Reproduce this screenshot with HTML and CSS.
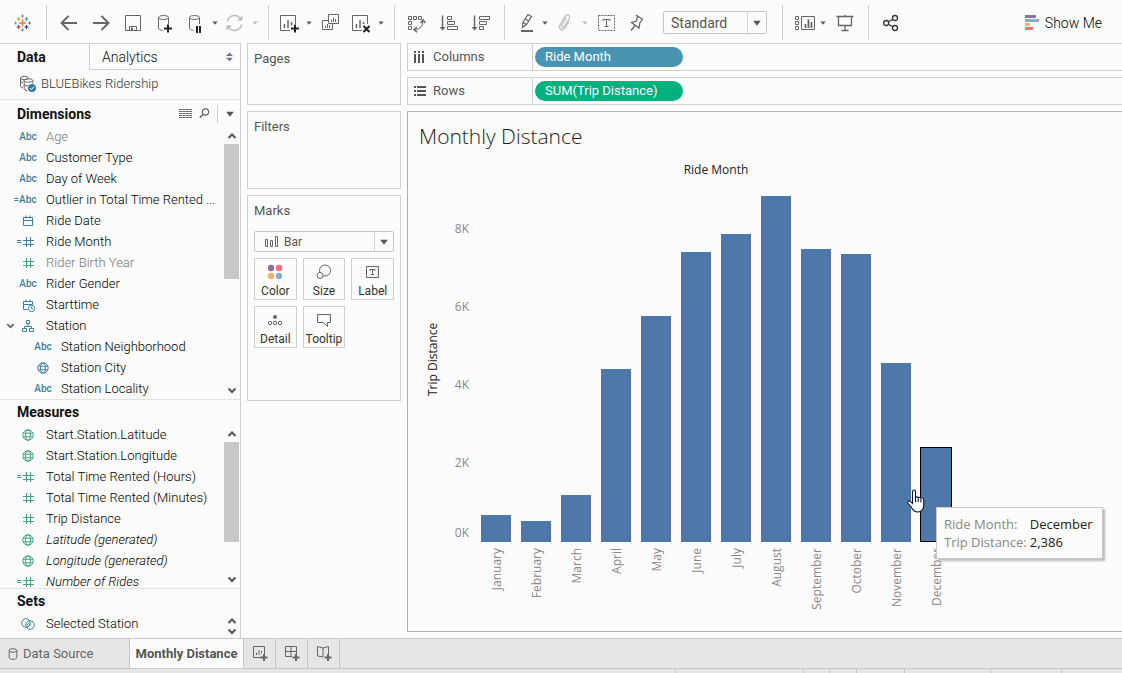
FILE: index.html
```html
<!DOCTYPE html>
<html lang="en">
<head>
<meta charset="utf-8">
<title>Monthly Distance</title>
<meta name="viewport" content="width=device-width, initial-scale=1">
<link rel="stylesheet" href="styles.css">
</head>
<body>
<svg class="defs" aria-hidden="true">
  <symbol id="i-caret" viewBox="0 0 8 8"><path d="M1.5 2.5h5L4 5.8z" fill="currentColor"/></symbol>
  <symbol id="i-hash" viewBox="0 0 12 12"><path d="M4.500 1v10M8.500 1v10M1 4.500h11M1 8.500h11" fill="none" stroke="currentColor"/></symbol>
  <symbol id="i-globe" viewBox="0 0 12 12"><g fill="none" stroke="currentColor"><circle cx="6" cy="6" r="5.2"/><ellipse cx="6" cy="6" rx="2.4" ry="5.2"/><path d="M1.2 4.2h9.6M1.2 7.8h9.6"/></g></symbol>
  <symbol id="i-up" viewBox="0 0 10 10"><path d="M1.5 7L5 3.5 8.500 7" fill="none" stroke="currentColor" stroke-width="2"/></symbol>
  <symbol id="i-down" viewBox="0 0 10 10"><path d="M1.5 3.500L5 7l3.500-3.500" fill="none" stroke="currentColor" stroke-width="2"/></symbol>
</svg>

<header class="toolbar">
  <div class="brand">
    <svg width="18" height="18" viewBox="0 0 18 18" fill="none">
      <path d="M8.500 5.500v7M5 9h7" stroke="#eb7b3a" stroke-width="1.300"/>
      <path d="M4.500 3v4M2.500 5h4" stroke="#f0a03c" stroke-width="1.200"/>
      <path d="M12.500 3v4M10.500 5h4" stroke="#5b93a8" stroke-width="1.200"/>
      <path d="M4.500 11v4M2.500 13h4" stroke="#c8304c" stroke-width="1.200"/>
      <path d="M12.500 11v4M10.500 13h4" stroke="#29467a" stroke-width="1.200"/>
      <path d="M8.500 .5v3M7 2h3M8.500 14.500v3M7 16h3" stroke="#7c80a4"/>
      <path d="M1.500 7.500v3M0 9h3" stroke="#6ba3b5"/><path d="M15.500 7.500v3M14 9h3" stroke="#6c6f99"/>
    </svg>
  </div>
  <div class="group">
    <button class="tool" aria-label="Undo"><svg viewBox="0 0 24 24"><path d="M4.500 12H20M11.500 5l-7 7 7 7" stroke-width="1.900"/></svg></button>
    <button class="tool" aria-label="Redo"><svg viewBox="0 0 24 24"><path d="M4 12h15.500M12.500 5l7 7-7 7" stroke-width="1.900"/></svg></button>
    <button class="tool" aria-label="Save"><svg viewBox="0 0 24 24"><path d="M4.500 4.500h15v15h-15zM8.500 19.500v-4h7v4"/><path d="M10 16.500h2v3h-2z" class="solid"/></svg></button>
    <button class="tool" aria-label="New Data Source"><svg viewBox="0 0 24 24"><ellipse cx="10.500" cy="6.500" rx="5" ry="2"/><path d="M5.500 6.500V17c0 1.200 1.500 2 4 2.300M15.500 6.500V13"/><path d="M15 13.500v8M11 17.500h8" class="strong"/></svg></button>
    <button class="tool tool-narrow" aria-label="Pause Auto Updates"><svg viewBox="0 0 24 24"><ellipse cx="11.500" cy="6.500" rx="5" ry="2"/><path d="M6.500 6.500V17c0 1.200 1.500 2 4 2.300M16.500 6.500V13"/><path d="M14 15v7M17 15v7" class="strong"/></svg></button>
    <button class="caret" aria-label="Auto update options"><svg><use href="#i-caret"/></svg></button>
    <button class="tool tool-narrow muted" aria-label="Run Update"><svg viewBox="0 0 24 24"><path d="M4.500 10.500A7 7 0 0 1 17.500 8M18.500 13.500A7 7 0 0 1 5.500 16" stroke-width="1.500"/><path d="M19.500 4.500v5h-5.300zM3.500 19.500v-5h5.300z" class="solid"/></svg></button>
    <button class="caret muted" aria-label="Update options"><svg><use href="#i-caret"/></svg></button>
  </div>
  <div class="group">
    <button class="tool tool-narrow" aria-label="New Worksheet"><svg viewBox="0 0 24 24"><path d="M13 19.500H3.500v-15h15V13"/><path d="M7.500 17v-4M11 17V9M14.500 14.500V11" stroke-width="1.500"/><path d="M18 13.500v8M14 17.500h8" class="strong"/></svg></button>
    <button class="caret" aria-label="New worksheet options"><svg><use href="#i-caret"/></svg></button>
    <button class="tool" aria-label="Duplicate"><svg viewBox="0 0 24 24"><path d="M9.500 3.500h10v9h-10zM9 9.500H3.500v9h10V13M12.500 11V8.500M14.500 11V6.500M16.500 11V8M6.500 17v-2.500M8.500 17v-4M10.500 17v-3"/></svg></button>
    <button class="tool tool-narrow" aria-label="Clear Sheet"><svg viewBox="0 0 24 24"><path d="M13 19.500H3.500v-15h15V13"/><path d="M7.500 17v-4M11 17V9M14.500 13V11" stroke-width="1.500"/><path d="M14.500 15l6 6M20.500 15l-6 6" class="strong"/></svg></button>
    <button class="caret" aria-label="Clear options"><svg><use href="#i-caret"/></svg></button>
  </div>
  <div class="group">
    <button class="tool" aria-label="Swap Rows and Columns"><svg viewBox="0 0 24 24"><path d="M3.500 5.500h3v3h-3zM8.500 5.500h3v3h-3zM13.500 5.500h3v3h-3zM3.500 10.500h3v3h-3zM3.500 15.500h3v3h-3zM10.500 18.500q7-.5 7.500-8" /><path d="M15.500 12l2.600-3 2.400 3M12 16l-3 2.500 3 2.600" stroke-width="1.500"/></svg></button>
    <button class="tool" aria-label="Sort Ascending"><svg viewBox="0 0 24 24"><path d="M5.500 4.500V18" stroke-width="1.500"/><path d="M2.500 16h6l-3 3.600z" class="solid"/><path d="M10.500 5.500h4v3h-4zM10.500 10.500h7v3h-7zM10.500 15.500h10v3h-10z"/></svg></button>
    <button class="tool" aria-label="Sort Descending"><svg viewBox="0 0 24 24"><path d="M5.500 4.500V18" stroke-width="1.500"/><path d="M2.500 16h6l-3 3.600z" class="solid"/><path d="M10.500 5.500h10v3h-10zM10.500 10.500h7v3h-7zM10.500 15.500h4v3h-4z"/></svg></button>
  </div>
  <div class="group">
    <button class="tool tool-narrow" aria-label="Highlight"><svg viewBox="0 0 24 24"><path d="M9.500 16.500l.5-5 5-8 3.500 2-5 8zM10 11.500l3.500 2M12.500 8l3.500 2" stroke-width="1.200"/><path d="M8 20h12" stroke-width="2"/></svg></button>
    <button class="caret" aria-label="Highlight options"><svg><use href="#i-caret"/></svg></button>
    <button class="tool tool-narrow muted" aria-label="Group Members"><svg viewBox="0 0 24 24"><path d="M13 7l-4 7c-1 2 1 3.200 2.200 1.500l5-7.500c2-3.500-2-5.500-4.200-2.500l-5 8.500c-2 4 2 6.500 4.500 3.500l4.500-7" stroke-width="1.200"/></svg></button>
    <button class="caret muted" aria-label="Group options"><svg><use href="#i-caret"/></svg></button>
    <button class="tool" aria-label="Show Mark Labels"><svg viewBox="0 0 24 24"><path d="M3.500 4.500h16v15h-16z" stroke-dasharray="2 1"/><path d="M8 10V8.500h7V10M11.500 8.500v7M9.500 15.500h4"/></svg></button>
    <button class="tool tool-narrow" aria-label="Fix Axes"><svg viewBox="0 0 24 24"><path d="M11 4l7 4.500M12.500 5l-1 5-5 1.500 7.500 5.500.8-5 2.700-4M10 14.500L6 19.500" stroke-width="1.300"/></svg></button>
    <label class="select fit"><select aria-label="Fit"><option>Standard</option></select><svg><use href="#i-caret"/></svg></label>
  </div>
  <div class="group">
    <button class="tool tool-narrow" aria-label="Show or Hide Cards"><svg viewBox="0 0 24 24"><path d="M4.500 5.500h3v3h-3zM4.500 10.500h3v3h-3zM4.500 15.500h3v3h-3zM10.500 5.500h13v13h-13z"/><path d="M14.500 17v-4M17.500 17V8.500M20.500 17v-6" stroke-width="1.800"/></svg></button>
    <button class="caret" aria-label="Cards options"><svg><use href="#i-caret"/></svg></button>
    <button class="tool" aria-label="Presentation Mode"><svg viewBox="0 0 24 24"><path d="M3.500 5.500h17M5.500 5.500v9h13v-9M12 15v4.500M8.500 19.500h7M12 4v1.500" stroke-width="1.300"/></svg></button>
  </div>
  <div class="group group-last">
    <button class="tool" aria-label="Share"><svg viewBox="0 0 24 24" class="dark"><circle cx="7.200" cy="12" r="2.500"/><circle cx="16" cy="7" r="2.500"/><circle cx="16" cy="17" r="2.500"/><path d="M9.500 10.800L13.700 8.300M9.500 13.200l4.200 2.500"/></svg></button>
  </div>
  <button class="show-me">
    <svg width="14" height="16" viewBox="0 0 14 16"><path fill="#8b7196" d="M0 0h11v3H0z"/><path fill="#8aaccb" d="M0 4h14v3H0z"/><path fill="#f6b26b" d="M0 8h5v3H0z"/><path fill="#f8707f" d="M0 12h8v3H0z"/></svg>
    Show Me
  </button>
</header>

<main class="workspace">
  <aside class="sidebar">
    <div class="side-tabs">
      <button class="side-tab active">Data</button>
      <button class="side-tab">Analytics <svg width="7" height="10" viewBox="0 0 7 10"><path d="M0 4h7L3.500.500zM0 5.800h7L3.500 9.300z" fill="#6a7694"/></svg></button>
    </div>
    <a class="source" href="#source">
      <svg width="18" height="18" viewBox="0 0 18 18" fill="none" stroke="#666"><ellipse cx="5.500" cy="3" rx="4" ry="1.600"/><path d="M1.500 3v8c0 1 1 1.700 2.500 1.900M1.500 6c0 .8 1 1.300 2.500 1.500"/><ellipse cx="9.500" cy="5.500" rx="4.300" ry="1.700"/><path d="M5.200 5.500v8.300c0 1 1.300 1.700 3.300 1.900M13.800 5.500v3M5.200 9.500c.8 1 2 1.300 4 1.200"/><circle cx="13" cy="13" r="4" fill="#2f7e9e" stroke="none"/><path d="M11 13l1.500 1.500 2.500-3" stroke="#fff"/></svg>
      BLUEBikes Ridership
    </a>

    <section class="fields">
      <div class="fields-head tall">
        <h2>Dimensions</h2>
        <button aria-label="View as list"><svg width="13" height="12" viewBox="0 0 13 12"><path d="M0 1.500h13M0 3.500h13M0 5.500h13M0 7.500h13M0 9.500h13" stroke="#666" stroke-dasharray="3 .4"/></svg></button>
        <button aria-label="Find field"><svg width="11" height="11" viewBox="0 0 11 11" fill="none" stroke="#666"><circle cx="6.500" cy="4" r="3.200" stroke-width="1.200"/><path d="M4 6.500L.8 9.700" stroke-width="1.600"/></svg></button>
        <button class="head-menu" aria-label="Field options"><svg width="12" height="12"><use href="#i-caret"/></svg></button>
      </div>
      <div class="fields-body">
        <ul class="list dim">
          <li class="hidden-field"><span class="ico abc">Abc</span>Age</li>
          <li><span class="ico abc">Abc</span>Customer Type</li>
          <li><span class="ico abc">Abc</span>Day of Week</li>
          <li><span class="ico abc calc">Abc</span>Outlier in Total Time Rented ...</li>
          <li><span class="ico"><svg viewBox="0 0 12 12"><path d="M1.500 2.500h9v8h-9zM1.500 5.500h9M4 .5v3M8 .5v3"/></svg></span>Ride Date</li>
          <li><span class="ico calc"><svg><use href="#i-hash"/></svg></span>Ride Month</li>
          <li class="hidden-field"><span class="ico numeric"><svg><use href="#i-hash"/></svg></span>Rider Birth Year</li>
          <li><span class="ico abc">Abc</span>Rider Gender</li>
          <li><span class="ico"><svg viewBox="0 0 12 12"><path d="M5.500 10.500h-4v-8h9v3M1.500 5.500h9M4 .5v3M8 .5v3"/><circle cx="9.500" cy="9.500" r="3.200" fill="#fcfcfc"/><path d="M9.500 7.700v2h1.500"/></svg></span>Starttime</li>
          <li><button class="twist" aria-label="Collapse Station"><svg><use href="#i-down"/></svg></button><span class="ico"><svg viewBox="0 0 12 12"><path d="M4.500 .5h3v3h-3zM.5 8.500h4v3h-4zM7.500 8.500h4v3h-4zM6 3.500V6M2.500 8.500v-2h7v2"/></svg></span>Station</li>
          <li class="child"><span class="ico abc">Abc</span>Station Neighborhood</li>
          <li class="child"><span class="ico"><svg><use href="#i-globe"/></svg></span>Station City</li>
          <li class="child"><span class="ico abc">Abc</span>Station Locality</li>
        </ul>
        <div class="scroll"><svg><use href="#i-up"/></svg><i class="thumb"></i><svg><use href="#i-down"/></svg></div>
      </div>
    </section>

    <section class="fields grow">
      <div class="fields-head"><h2>Measures</h2></div>
      <div class="fields-body">
        <ul class="list mea">
          <li><span class="ico"><svg><use href="#i-globe"/></svg></span>Start.Station.Latitude</li>
          <li><span class="ico"><svg><use href="#i-globe"/></svg></span>Start.Station.Longitude</li>
          <li><span class="ico calc"><svg><use href="#i-hash"/></svg></span>Total Time Rented (Hours)</li>
          <li><span class="ico"><svg><use href="#i-hash"/></svg></span>Total Time Rented (Minutes)</li>
          <li><span class="ico"><svg><use href="#i-hash"/></svg></span>Trip Distance</li>
          <li class="generated"><span class="ico"><svg><use href="#i-globe"/></svg></span>Latitude (generated)</li>
          <li class="generated"><span class="ico"><svg><use href="#i-globe"/></svg></span>Longitude (generated)</li>
          <li class="generated"><span class="ico calc"><svg><use href="#i-hash"/></svg></span>Number of Rides</li>
        </ul>
        <div class="scroll"><svg><use href="#i-up"/></svg><i class="thumb"></i><svg><use href="#i-down"/></svg></div>
      </div>
    </section>

    <section class="fields">
      <div class="fields-head"><h2>Sets</h2></div>
      <div class="fields-body sets">
        <ul class="list dim">
          <li><span class="ico"><svg class="wide" viewBox="0 0 14 12"><circle cx="5" cy="5" r="4.300"/><circle cx="9" cy="7" r="4.300"/><path d="M5.500 7.500l3-3M6.500 9l3-3"/></svg></span>Selected Station</li>
        </ul>
        <div class="scroll"><svg><use href="#i-up"/></svg><svg><use href="#i-down"/></svg></div>
      </div>
    </section>
  </aside>

  <div class="cards">
    <section class="card pages"><h3>Pages</h3></section>
    <section class="card filters"><h3>Filters</h3></section>
    <section class="card marks">
      <h3>Marks</h3>
      <label class="select mark-type">
        <svg class="mark-icon" viewBox="0 0 14 13"><path d="M.5 4.500h2v7h-2zM5.500 5.500h2v6h-2zM10.500 1.500h2v10h-2z" fill="none" stroke="#666"/></svg>
        <select aria-label="Mark type"><option>Bar</option></select><svg><use href="#i-caret"/></svg>
      </label>
      <div class="mark-grid">
        <button><svg viewBox="0 0 16 16" class="flat"><circle cx="4" cy="4" r="3.200" fill="#8b7196"/><circle cx="12" cy="4" r="3.200" fill="#f8707f"/><circle cx="4" cy="12" r="3.200" fill="#f6b26b"/><circle cx="12" cy="12" r="3.200" fill="#8aaccb"/></svg>Color</button>
        <button><svg viewBox="0 0 16 16"><circle cx="9" cy="6.500" r="5.500"/><circle cx="4" cy="11.500" r="3" fill="#fcfcfc"/></svg>Size</button>
        <button><svg viewBox="0 0 16 16"><path d="M1.500 2.500h12v11h-12zM5 7V5.500h5V7M7.500 5.500v5M6 10.500h3"/></svg>Label</button>
        <button><svg viewBox="0 0 16 16"><circle cx="8" cy="5" r="2" class="solid"/><circle cx="3" cy="11" r="1.700"/><circle cx="8" cy="11" r="1.700"/><circle cx="13" cy="11" r="1.700"/></svg>Detail</button>
        <button><svg viewBox="0 0 16 16"><path d="M1.500 2.500h13v8h-3v4l-4-4h-6z"/></svg>Tooltip</button>
      </div>
    </section>
  </div>

  <div class="sheet">
    <div class="shelf"><div class="shelf-name"><svg width="12" height="12" viewBox="0 0 12 12"><path d="M1 0v2M5 0v2M9 0v2M1 3v9M5 3v9M9 3v9" stroke="#555" stroke-width="2"/></svg>Columns</div><button class="pill pill-blue">Ride Month</button></div>
    <div class="shelf"><div class="shelf-name"><svg width="12" height="12" viewBox="0 0 12 12"><path d="M0 2h2M3 2h9M0 6h2M3 6h9M0 10h2M3 10h9" stroke="#555" stroke-width="2"/></svg>Rows</div><button class="pill pill-green">SUM(Trip Distance)</button></div>
    <section class="canvas">
      <h1>Monthly Distance</h1>
      <div class="chart">
        <div class="x-title">Ride Month</div>
        <div class="y-title">Trip Distance</div>
        <div class="y-ticks"><span>8K</span><span>6K</span><span>4K</span><span>2K</span><span class="zero">0K</span></div>
        <div class="plot">
          <i style="height:27px"></i><i style="height:21px"></i><i style="height:47px"></i><i style="height:173px"></i><i style="height:226px"></i><i style="height:290px"></i><i style="height:308px"></i><i style="height:346px"></i><i style="height:293px"></i><i style="height:288px"></i><i style="height:179px"></i>
          <div class="bar-active" style="height:95px">
            <dl class="tip"><dt>Ride Month:</dt><dd>December</dd><dt>Trip Distance:</dt><dd>2,386</dd></dl>
            <svg class="pointer" viewBox="0 0 18 24"><path d="M5.500 14.500V2.500C5.500.5 8.500.5 8.500 2.500V9c0-1.500 2.700-1.500 2.700.3 0-1.500 2.700-1.300 2.700.5 0-1.300 2.800-1 2.800.7v6c0 3-2 6.500-6 6.500-3.500 0-5-2-6.500-5L.8 14c-.8-1.800 1.500-2.700 2.700-1.300zM8.500 9v4M11.200 9.500V13M13.900 10v3.500" fill="#fff" stroke="#0d1730" stroke-width="1.100"/></svg>
          </div>
        </div>
        <div class="x-labels"><span>January</span><span>February</span><span>March</span><span>April</span><span>May</span><span>June</span><span>July</span><span>August</span><span>September</span><span>October</span><span>November</span><span>December</span></div>
      </div>
    </section>
  </div>
</main>

<nav class="tabs">
  <button class="tab source-tab"><svg width="10" height="12" viewBox="0 0 10 12"><ellipse cx="5" cy="2.500" rx="3.800" ry="1.800"/><path d="M1.200 2.500v7c0 2.400 7.600 2.400 7.600 0v-7"/></svg>Data Source</button>
  <button class="tab active">Monthly Distance</button>
  <button class="tab new" aria-label="New Worksheet"><svg width="16" height="16" viewBox="0 0 16 16"><path d="M9 11.500H1.500v-11h11V8M4.500 9V6.500M7 9V4M9.500 7.500V5"/><path d="M12 8v7M8.500 11.500h7" stroke-width="2"/></svg></button>
  <button class="tab new" aria-label="New Dashboard"><svg width="16" height="16" viewBox="0 0 16 16"><path d="M8 10.500H1.500v-10h11V8M7 .5v10M1.500 5.500h11"/><path d="M12 8v7M8.500 11.500h7" stroke-width="2"/></svg></button>
  <button class="tab new" aria-label="New Story"><svg width="16" height="16" viewBox="0 0 16 16"><path d="M7 11l-5.500-1V.5L7 2l5.500-1.500V8M7 2v9"/><path d="M12 8v7M8.500 11.500h7" stroke-width="2"/></svg></button>
</nav>
<footer class="status"><i></i><i></i><i></i><i></i><i></i><i></i><i></i></footer>
</body>
</html>
```
FILE: styles.css
```css
* { box-sizing: border-box; }
body {
  margin: 0;
  height: 100vh;
  display: flex;
  flex-direction: column;
  background: #fcfcfc;
  color: #111;
  font: 13px/20px Roboto, "Liberation Sans", sans-serif;
  overflow: hidden;
}
button, select { font: inherit; color: inherit; background: none; border: 0; padding: 0; margin: 0; }
h1, h2, h3, ul, dl, dd { margin: 0; padding: 0; font: inherit; }
svg { flex: none; }
.defs { display: none; }

/* Toolbar */
.toolbar { display: flex; height: 43px; padding: 5px 20px 3px 0; color: #555; flex: none; }
.brand { width: 47px; display: flex; align-items: center; padding-left: 14px; border-right: 1px solid #d0d0d0; }
.group { display: flex; align-items: center; padding: 0 7px 0 6px; border-right: 1px solid #d0d0d0; }
.group-last { border-right: 0; }
.tool { width: 32px; height: 29px; padding-top: 1px; display: flex; align-items: center; justify-content: center; color: #666; }
.tool-narrow { width: 28px; }
.tool svg { width: 24px; height: 24px; fill: none; stroke: currentColor; }
.tool .solid { fill: currentColor; stroke: none; }
.tool .strong { stroke: #222; stroke-width: 2; }
.tool .dark { stroke: #333; stroke-width: 1.3; }
.caret { width: 12px; height: 28px; display: flex; align-items: center; justify-content: center; color: #555; }
.caret svg { width: 8px; height: 8px; }
.tool.muted, .caret.muted { color: #bbb; }
.select { display: flex; align-items: center; border: 1px solid #c4c4c4; border-radius: 2px; color: #555; }
.select select { appearance: none; flex: 1; align-self: stretch; border-right: 1px solid #d4d4d4; min-width: 0; }
.select svg { width: 12px; height: 12px; margin: 0 3px; }
.fit { width: 104px; height: 23px; margin: 0 8px 0 12px; font-size: 14px; }
.fit select { padding-left: 7px; }
.show-me { margin-left: auto; display: flex; align-items: center; gap: 6px; font-size: 14px; font-weight: 300; color: #000; }

/* Workspace */
.workspace { flex: 1; display: grid; grid-template: minmax(0, 1fr) / 241px 154px minmax(0, 1fr); column-gap: 6px; min-height: 0; }
.sidebar { display: flex; flex-direction: column; border: solid #d0d0d0; border-width: 1px 1px 0 0; min-height: 0; }
.side-tabs { display: flex; font-size: 14px; }
.side-tab { height: 26px; text-align: left; border: 0 solid #d0d0d0; }
.side-tab.active { width: 89px; padding-left: 17px; font-weight: 700; color: #111; }
.side-tab:not(.active) { flex: 1; display: flex; align-items: center; justify-content: space-between; padding: 0 7px 0 12px; border-width: 0 0 1px 1px; font-weight: 300; }
.source { display: flex; align-items: center; gap: 4px; height: 30px; padding: 0 0 1px 19px; color: #333; font-weight: 300; text-decoration: none; border-bottom: 1px solid #e2e2e2; }
.fields { display: flex; flex-direction: column; flex: none; }
.fields + .fields { border-top: 1px solid #e2e2e2; }
.fields.grow { flex: 1; min-height: 0; }
.fields-head { display: flex; align-items: center; height: 24px; padding-left: 17px; flex: none; }
.fields-head.tall { height: 27px; margin-bottom: -1px; }
.fields-head h2 { flex: 1; font-size: 14px; font-weight: 700; color: #111; }
.fields-head button { display: flex; align-items: center; margin-right: 7px; color: #555; }
.fields-head .head-menu { height: 18px; margin: 0 4px 0 0; padding-left: 6px; border-left: 1px solid #d0d0d0; }
.fields-body { display: flex; flex: 1; min-height: 0; }
.list { flex: 1; min-width: 0; list-style: none; overflow: hidden; font-weight: 300; color: #000; }
.list li { position: relative; display: flex; align-items: center; height: 21px; padding-left: 16px; white-space: nowrap; }
.list li.child { padding-left: 31px; }
.list .hidden-field { color: #777; }
.generated { font-style: italic; }
.ico { width: 24px; margin-right: 6px; display: flex; align-items: center; justify-content: center; }
.ico svg { width: 12px; height: 12px; fill: none; stroke: currentColor; overflow: visible; }
.ico svg.wide { width: 14px; }
.ico.calc::before { content: "="; font: 10px/12px Roboto, sans-serif; margin-left: -6px; }
.abc { font: 500 10px/20px Roboto, sans-serif; }
.dim .ico { color: #3e7f9f; }
.dim .numeric, .mea .ico { color: #3fa57f; }
.twist { position: absolute; left: 6px; display: flex; color: #666; }
.twist svg { width: 9px; height: 9px; }
.scroll { width: 17px; display: flex; flex-direction: column; align-items: center; justify-content: space-between; padding: 5px 1px 4px 1px; color: #555; }
.scroll svg { width: 10px; height: 10px; }
.scroll .thumb { width: 15px; height: 135px; background: #c8c8c8; margin: 3px 0 auto; }
.grow .scroll .thumb { height: 100px; }
.sets { padding-bottom: 2px; }
.sets .scroll { padding: 3px 1px 0 1px; }

/* Cards */
.cards { display: grid; grid-template-rows: 62px 78px auto; align-content: start; row-gap: 6px; }
.card { border: 1px solid #d0d0d0; padding: 5px 6px; color: #555; }
.marks { padding-bottom: 52px; }
.mark-type { height: 21px; margin: 10px 0 6px; font-size: 12px; }
.mark-type .mark-icon { width: 14px; height: 13px; margin: 0 5px 0 10px; }
.mark-grid { display: grid; grid-template-columns: repeat(3, 1fr); gap: 6px; }
.mark-grid button { height: 42px; padding-top: 5px; display: flex; flex-direction: column; align-items: center; justify-content: space-between; border: 1px solid #d0d0d0; font-size: 12px; line-height: 16px; color: #333; }
.mark-grid svg { width: 16px; height: 16px; fill: none; stroke: #666; }
.mark-grid .flat { stroke: none; }
.mark-grid .solid { fill: #666; stroke: none; }

/* Shelves */
.sheet { display: flex; flex-direction: column; gap: 6px; padding-bottom: 6px; min-width: 0; }
.shelf { display: flex; align-items: center; height: 28px; flex: none; border: solid #d0d0d0; border-width: 1px 0 1px 1px; }
.shelf-name { width: 125px; align-self: stretch; display: flex; align-items: center; gap: 7px; padding-left: 6px; border-right: 1px solid #d0d0d0; color: #555; }
.pill { width: 148px; height: 20px; margin-left: 2px; padding-left: 10px; border-radius: 10px; text-align: left; color: #fff; }
.pill-blue { background: #4a94b3; }
.pill-green { background: #00b180; }

/* Chart */
.canvas { flex: 1; border: solid #b0b0b0; border-width: 1px 0 1px 1px; padding: 12px 0 0 11px; font-family: "Open Sans", "Noto Sans", sans-serif; }
.canvas h1 { font-size: 21px; line-height: 24px; font-weight: 300; color: #222; }
.chart { display: grid; grid-template-columns: 16px 28px 480px; grid-template-rows: 20px 353px auto; row-gap: 9px; margin: 12px 0 0 6px; font-size: 12px; line-height: 18px; }
.x-title { grid-column: 3; text-align: center; line-height: 20px; margin: 0 -7px 0 7px; color: #222; }
.y-title { grid-area: 2 / 1; writing-mode: vertical-rl; transform: rotate(180deg); text-align: center; padding-top: 12px; line-height: 16px; color: #222; }
.y-ticks { grid-area: 2 / 2; display: grid; grid-template-rows: repeat(4, 78px) 1fr; align-items: center; justify-items: end; padding-top: 1px; color: #888; }
.y-ticks .zero { align-self: end; }
.plot { grid-area: 2 / 3; display: grid; grid-template-columns: repeat(12, 40px); align-items: end; margin: 0 -7px 0 7px; }
.plot > * { margin: 0 5px; background: #4e78aa; }
.plot .bar-active { position: relative; margin: 0 4px; border: 1px solid #000; }
.x-labels { grid-area: 3 / 3; display: grid; grid-template-columns: repeat(12, 40px); align-items: start; justify-items: center; margin: -3px -8px 0 8px; color: #888; }
.x-labels span { writing-mode: vertical-rl; transform: rotate(180deg); }
.tip { position: absolute; z-index: 2; left: 15px; top: 59px; display: grid; grid-template-columns: auto auto; column-gap: 3px; padding: 7px 9px 7px 7px; background: #fcfcfc; border: 1px solid #c8c8c8; box-shadow: 2px 2px 2px #bbb; font-size: 13px; line-height: 18px; color: #888; white-space: nowrap; }
.tip dd { color: #222; }
.pointer { position: absolute; z-index: 3; left: -14px; top: 41px; width: 18px; height: 24px; }

/* Sheet tabs */
.tabs { display: flex; height: 31px; flex: none; background: #e6e6e6; border: solid #c8c8c8; border-width: 1px 0; }
.tab { border-right: 1px solid #c8c8c8; color: #666; }
.tab svg { fill: none; stroke: #666; }
.tab.active { width: 114px; background: #fcfcfc; font-weight: 700; color: #555; white-space: nowrap; }
.source-tab { width: 130px; display: flex; align-items: center; gap: 5px; padding-left: 8px; }
.new { width: 32px; display: flex; align-items: center; justify-content: center; }
.status { height: 4px; flex: none; display: grid; grid-template-columns: 60.25% 11.4% 2.3% 2.4% 4.3% 7.7% 6.3%; background: #e6e6e6; }
.status i { border-right: 1px solid #c8c8c8; }
```
